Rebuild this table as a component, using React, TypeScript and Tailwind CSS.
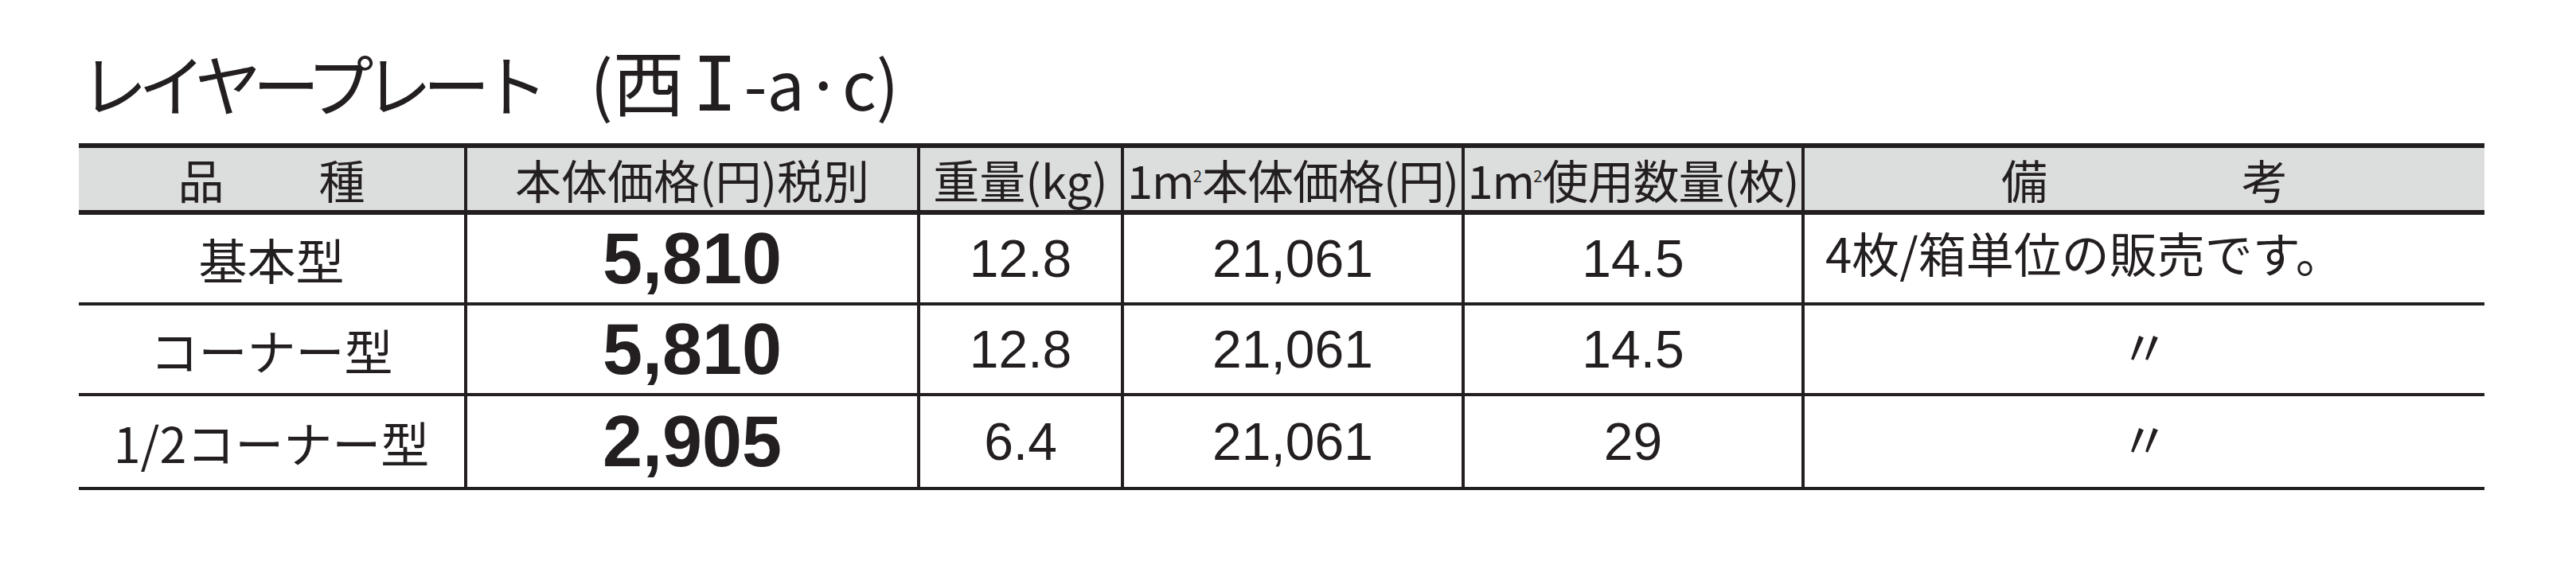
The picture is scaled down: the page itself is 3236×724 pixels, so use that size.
import React from "react";

const JP = "font-['Noto_Sans_CJK_JP',sans-serif]";
const NUM = "font-['Liberation_Sans',Arial,sans-serif]";

type Row = { name: string; price: string; weight: string; m2price: string; qty: string; note: string | null };

const rows: Row[] = [
  { name: "基本型", price: "5,810", weight: "12.8", m2price: "21,061", qty: "14.5", note: "4枚/箱単位の販売です。" },
  { name: "コーナー型", price: "5,810", weight: "12.8", m2price: "21,061", qty: "14.5", note: null },
  { name: "1/2コーナー型", price: "2,905", weight: "6.4", m2price: "21,061", qty: "29", note: null },
];

function Sq() {
  return <span className="inline-block text-[20px] leading-none align-top -translate-y-[4px] -ml-[1px] mr-[1px]">2</span>;
}

export default function App() {
  return (
    <div className="w-[3236px] h-[724px] bg-white text-[#231f20] pl-[99px] pt-[62px]">
      <h1 className={`${JP} text-[84px] leading-none font-normal h-[84px] flex items-center whitespace-nowrap pl-[2px]`}>
        <span className="tracking-[-11px]">レイヤープレート</span>
        <span className="ml-[64px]">
          (<span className="text-[90px]">西</span>
          <span className="font-['DejaVu_Sans_Mono',monospace] text-[94px] ml-[10px] mr-[8px]">I</span>-a·c)
        </span>
      </h1>
      <div className="mt-[34px] w-[3022px] border-t-[6px] border-b-[4px] border-[#231f20]">
        <div className={`${JP} flex h-[84px] bg-[#dcdddd] border-b-[6px] border-[#231f20] text-[58px] leading-none whitespace-nowrap`}>
          <div className="w-[484px] flex items-center justify-center gap-[119px]">
            <span>品</span>
            <span>種</span>
          </div>
          <div className="w-[569px] border-l-4 border-[#231f20] flex items-center justify-center">本体価格(円)税別</div>
          <div className="w-[256px] border-l-4 border-[#231f20] flex items-center justify-center">重量(kg)</div>
          <div className="w-[428px] border-l-4 border-[#231f20] flex items-center justify-center tracking-[-1px]">
            1m<Sq />本体価格(円)
          </div>
          <div className="w-[427px] border-l-4 border-[#231f20] flex items-center justify-center tracking-[-1px]">
            1m<Sq />使用数量(枚)
          </div>
          <div className="w-[858px] border-l-4 border-[#231f20] flex items-center justify-center gap-[244px]">
            <span>備</span>
            <span>考</span>
          </div>
        </div>
        {rows.map((r, i) => (
          <div
            key={i}
            className={`flex h-[114px] leading-none whitespace-nowrap ${i < rows.length - 1 ? "border-b-4 border-[#231f20]" : ""}`}
          >
            <div className={`${JP} w-[484px] flex items-center justify-center text-[61px]`}>{r.name}</div>
            <div className={`${NUM} w-[569px] border-l-4 border-[#231f20] flex items-center justify-center text-[90px] font-bold`}>
              {r.price}
            </div>
            <div className={`${NUM} w-[256px] border-l-4 border-[#231f20] flex items-center justify-center text-[66px]`}>
              {r.weight}
            </div>
            <div className={`${NUM} w-[428px] border-l-4 border-[#231f20] flex items-center justify-center text-[66px]`}>
              {r.m2price}
            </div>
            <div className={`${NUM} w-[427px] border-l-4 border-[#231f20] flex items-center justify-center text-[66px]`}>
              {r.qty}
            </div>
            {r.note ? (
              <div className={`${JP} w-[858px] border-l-4 border-[#231f20] flex items-center pl-[26px] pb-[16px] text-[60px]`}>
                {r.note}
              </div>
            ) : (
              <div className={`${JP} w-[858px] border-l-4 border-[#231f20] flex items-center justify-center pb-[10px] text-[62px]`}>
                〃
              </div>
            )}
          </div>
        ))}
      </div>
    </div>
  );
}
